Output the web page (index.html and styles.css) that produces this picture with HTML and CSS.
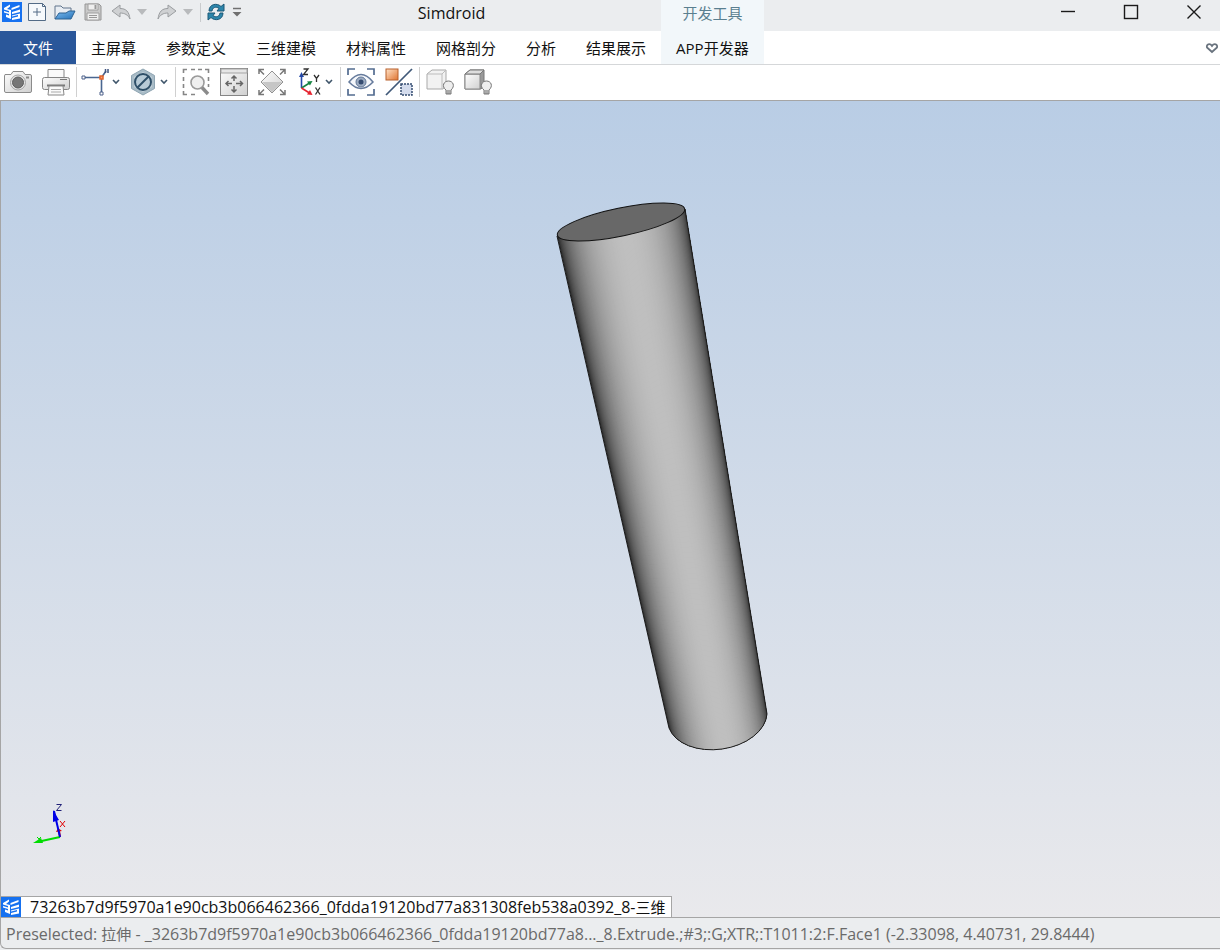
FILE: index.html
```html
<!DOCTYPE html>
<html lang="zh-CN">
<head>
<meta charset="utf-8">
<title>Simdroid</title>
<link rel="stylesheet" href="styles.css">
</head>
<body>
<svg class="defs" aria-hidden="true">
  <defs>
    <linearGradient id="silver" x1="0" y1="0" x2="1" y2="1"><stop offset="0" stop-color="#fdfdfd"/><stop offset="1" stop-color="#d0d0d0"/></linearGradient>
    <linearGradient id="orange" x1="0" y1="0" x2="1" y2="1"><stop offset="0" stop-color="#ffe3c8"/><stop offset="1" stop-color="#e07430"/></linearGradient>
    <linearGradient id="folder" x1="0" y1="0" x2="1" y2="1"><stop offset="0" stop-color="#7ebdf0"/><stop offset="1" stop-color="#2672b8"/></linearGradient>
    <symbol id="logo" viewBox="0 0 20 20">
      <rect width="20" height="20" fill="#1671f0"/>
      <path d="M2 6l6-3.500v2L5 7l4 1v9l-5-2v-2.500l3 1v-1.500l-5-1.500V9l5 1.500V9L2 7.500z" fill="#fff"/>
      <path d="M9.500 6l8-3v2l-8 3zM10 10l8-2.500v2.500l-8 2zM10 13.500l8-2v5l-8 1.500v-2l6-1.500v-1.500l-6 1.500z" fill="#fff"/>
    </symbol>
    <symbol id="chevron" viewBox="0 0 8 6"><path d="M1 1l3 3 3-3" fill="none" stroke="#40566b" stroke-width="1.600"/></symbol>
  </defs>
</svg>
<div class="window">
  <header class="ribbon">
    <div class="titlebar">
      <div class="quick">
        <svg class="logo" viewBox="0 0 20 20"><use href="#logo"/></svg>
        <button class="q q-new" aria-label="新建"><svg viewBox="0 0 18 18"><path d="M.5.500h14l3 3v14H.5z" fill="#f6f9fc" stroke="#536b86"/><path d="M14.500.500v3h3M9 5v8M5 9h8" fill="none" stroke="#536b86"/></svg></button>
        <button class="q q-open" aria-label="打开"><svg viewBox="0 0 22 18"><path d="M1 16V3h6l2 2h8v4" fill="#e8edf3" stroke="#60758c"/><path d="M1 16l4-6h7l3-2h6l-4 8z" fill="url(#folder)" stroke="#2e6292"/></svg></button>
        <button class="q q-save" aria-label="保存"><svg viewBox="0 0 18 18"><path d="M1 1h14l2 2v14H1z" fill="#c9c9c9" stroke="#969696"/><path d="M4 1h10v6H4zM3 10h12v7H3z" fill="#efefef" stroke="#a0a0a0"/><path d="M10.500 2h2v4h-2z" fill="#999"/><path d="M5 12.500h8M5 14.500h8" stroke="#999"/></svg></button>
        <button class="q q-undo" aria-label="撤销"><svg viewBox="0 0 20 16"><path d="M1 7l8-6v3.500c6 0 9 3 10 10.500-2-4-5-6-10-6V13z" fill="#cfd1d3" stroke="#9a9da0"/></svg></button>
        <button class="q q-drop" aria-label="撤销列表"><svg viewBox="0 0 10 6"><path d="M0 0h10L5 6z" fill="#b8babc"/></svg></button>
        <button class="q q-redo" aria-label="重做"><svg viewBox="0 0 20 16"><path d="M19 7l-8-6v3.500C5 4.500 2 7.500 1 15c2-4 5-6 10-6V13z" fill="#cfd1d3" stroke="#9a9da0"/></svg></button>
        <button class="q q-drop" aria-label="重做列表"><svg viewBox="0 0 10 6"><path d="M0 0h10L5 6z" fill="#b8babc"/></svg></button>
        <span class="q-sep"></span>
        <button class="q q-refresh" aria-label="刷新"><svg viewBox="0 0 18 18"><path d="M2 8C2 1 10-.5 14 3.500L17 1v7h-7l2-2.500C9 3 5.500 4.500 5 8z" fill="#2d86ab" stroke="#1c5877"/><path d="M16 10c0 7-8 8.500-12 4.500L1 17v-7h7l-2 2.500c3 2.500 6.500 1 7-2.500z" fill="#2d86ab" stroke="#1c5877"/></svg></button>
        <button class="q q-more" aria-label="自定义快速访问"><svg viewBox="0 0 10 10"><path d="M1 1.500h8" stroke="#707070" stroke-width="1.500"/><path d="M.5 5h9L5 9.500z" fill="#707070"/></svg></button>
      </div>
      <h1 class="title">Simdroid</h1>
    </div>
    <div class="context">开发工具</div>
    <div class="controls">
      <button aria-label="最小化"><svg viewBox="0 0 16 16"><path d="M1 7.500h14" stroke="#1a1a1a" stroke-width="1.400"/></svg></button>
      <button aria-label="最大化"><svg viewBox="0 0 16 16"><rect x="1.500" y="1.500" width="13" height="13" fill="none" stroke="#1a1a1a" stroke-width="1.400"/></svg></button>
      <button aria-label="关闭"><svg viewBox="0 0 16 16"><path d="M1.500 1.500l13 13M14.500 1.500l-13 13" stroke="#1a1a1a" stroke-width="1.400"/></svg></button>
    </div>
    <nav class="tabs">
      <button class="tab file">文件</button>
      <button class="tab">主屏幕</button>
      <button class="tab">参数定义</button>
      <button class="tab">三维建模</button>
      <button class="tab">材料属性</button>
      <button class="tab">网格剖分</button>
      <button class="tab">分析</button>
      <button class="tab">结果展示</button>
    </nav>
    <button class="tab app">APP开发器</button>
    <div class="tabs-end">
      <button class="heart" aria-label="收藏"><svg viewBox="0 0 14 12"><path d="M7 10L2 5.500C1 2 5 1 7 4c2-3 6-2 5 1.500z" fill="none" stroke="#69737e" stroke-width="1.800"/></svg></button>
    </div>
  </header>

  <div class="toolbar">
    <button class="tool" aria-label="截图"><svg viewBox="0 0 28 28"><path d="M1 6.500h6l2-3h10l2 3h5q1.500 0 1.500 1.500v15q0 1.500-1.500 1.500H2q-1.500 0-1.500-1.500V8z" fill="url(#silver)" stroke="#8b8b8b"/><circle cx="14" cy="14.500" r="7.500" fill="#e6e6e6" stroke="#a5a5a5"/><circle cx="14" cy="14.500" r="5.500" fill="#777" stroke="#606060"/><path d="M22 9.500h3" stroke="#888" stroke-width="2"/></svg></button>
    <button class="tool" aria-label="打印"><svg viewBox="0 0 28 28"><path d="M6 10V1.500h16V10" fill="#fafafa" stroke="#888"/><rect x=".5" y="9.500" width="27" height="12" rx="2" fill="url(#silver)" stroke="#858585"/><path d="M18 11.500h7" stroke="#777"/><path d="M5 17.500h18" stroke="#777" stroke-width="2"/><path d="M7 18h14l1 9H6z" fill="#fafafa" stroke="#888"/><path d="M9 21.500h10M9 24h10" stroke="#aaa"/></svg></button>
    <span class="sep"></span>
    <button class="tool drop" aria-label="选择点线"><svg viewBox="0 0 28 28"><path d="M3 9.500h17.500V25M20.500 9.500L25 3" fill="none" stroke="#4a6690" stroke-width="1.600"/><path d="M1 8h3v3H1zM19 24h3v3h-3z" fill="#fff" stroke="#4d618a"/><rect x="19" y="8" width="3" height="3" fill="#f4a072" stroke="#e2632b" stroke-width="1.500"/><path d="M24.500 5V1M27 5V1" stroke="#3e537e" stroke-width="1.500"/></svg><svg class="chev" viewBox="0 0 8 6"><use href="#chevron"/></svg></button>
    <button class="tool drop" aria-label="禁用选择"><svg viewBox="0 0 28 28"><path d="M14 1l11.500 6.500v13L14 27 2.500 20.500v-13z" fill="#a9bcc7" stroke="#8fa5b2"/><path d="M14 4l9 5v10l-9 5-9-5V9z" fill="#c3d1da"/><circle cx="14" cy="14" r="8" fill="#b8cbd7" stroke="#2e4f68" stroke-width="2"/><path d="M8.500 19.500l11-11" stroke="#2e4f68" stroke-width="2"/></svg><svg class="chev" viewBox="0 0 8 6"><use href="#chevron"/></svg></button>
    <span class="sep"></span>
    <button class="tool" aria-label="框选放大"><svg viewBox="0 0 28 28"><path d="M1.500 5V1.500H5M9 1.500h4M16 1.500h4M23 1.500h3.500V5M1.500 9v4M1.500 16v4M1.500 23v3.500H5M9 26.500h4M26.500 9v4M26.500 16v3" fill="none" stroke="#868686" stroke-width="1.600"/><circle cx="15.500" cy="14.500" r="6.500" fill="#efefef" stroke="#9a9a9a" stroke-width="1.600"/><path d="M20 19.500l6 6.500" stroke="#8b8b8b" stroke-width="3.400"/></svg></button>
    <button class="tool" aria-label="适合窗口"><svg viewBox="0 0 28 28"><rect x=".5" y=".5" width="27" height="27" fill="url(#silver)" stroke="#858585"/><path d="M1 1h26v4H1z" fill="#e6e6e6" stroke="#a5a5a5"/><path d="M14 8v5M14 18v6M6 15.500h6M16 15.500h7M11.500 10.500L14 8l2.500 2.500M11.500 21.500L14 24l2.500-2.500M8.500 13L6 15.500 8.500 18M20 13l2.500 2.500L20 18" fill="none" stroke="#666" stroke-width="1.500"/></svg></button>
    <button class="tool" aria-label="全部显示"><svg viewBox="0 0 28 28"><path d="M14 3l11 11-11 11L3 14z" fill="url(#silver)" stroke="#929292"/><path d="M4 14h20L14 24z" fill="#c6c6c6"/><path d="M1 6V1.500h5M1 1.500l5 5M22 1.500h5V6M27 1.500l-5 5M1 22v4.500h5M1 26.500l5-5M22 26.500h5V22M27 26.500l-5-5" fill="none" stroke="#777" stroke-width="1.500"/></svg></button>
    <button class="tool drop" aria-label="视图方向"><svg viewBox="0 0 28 28"><path d="M7.500 20V7" stroke="#2448a8" stroke-width="1.600"/><path d="M7.500 4l-2.500 5h5z" fill="#2448a8"/><path d="M7.500 20l8-5" stroke="#168442" stroke-width="1.600"/><path d="M18.500 13l-5.500.500 3 4z" fill="#168442"/><path d="M7.500 20l8 5" stroke="#e62430" stroke-width="1.600"/><path d="M18.500 27l-5.500-.500 3-4.500z" fill="#e62430"/><path d="M9.500 1h4.500l-4.500 5.500H14M20 7l2.500 3.500L25 7M22.500 10.500V14M21.500 19.500l4.500 7M26 19.500l-4.500 7" fill="none" stroke="#303030" stroke-width="1.300"/></svg><svg class="chev" viewBox="0 0 8 6"><use href="#chevron"/></svg></button>
    <span class="sep"></span>
    <button class="tool" aria-label="显示"><svg viewBox="0 0 28 28"><path d="M1 7V1h7M20 1h7v6M1 21v6h7M20 27h7v-6" fill="none" stroke="#536c90" stroke-width="1.700"/><path d="M2 14q12-15 24 0-12 13-24 0z" fill="#f5f7fb" stroke="#667b9c" stroke-width="1.500"/><circle cx="14" cy="14" r="5" fill="#9cabc1" stroke="#637897"/><circle cx="14" cy="14" r="2.500" fill="#354b70"/></svg></button>
    <button class="tool" aria-label="反转显示"><svg viewBox="0 0 28 28"><rect x="1" y="1" width="12" height="11" fill="url(#orange)" stroke="#b8612c"/><path d="M1 27L27 1" stroke="#405978" stroke-width="1.700"/><rect x="16" y="16" width="11" height="11" fill="#d4dced" stroke="#344c70" stroke-width="1.500" stroke-dasharray="2 1"/></svg></button>
    <span class="sep"></span>
    <button class="tool" aria-label="显示实体"><svg viewBox="0 0 28 28"><path d="M1 6l5-4h14v15l-3 4H1z" fill="#f2f2f2" stroke="#a9a9a9"/><path d="M1 6h15v15M16 6l4-4" fill="none" stroke="#bcbcbc"/><path d="M20 22c-5-4-2-9 2.500-9s7 5 2.500 9v4h-5z" fill="#eee" stroke="#777"/><path d="M20.500 23h4M20.500 25h4" stroke="#666"/></svg></button>
    <button class="tool" aria-label="隐藏实体"><svg viewBox="0 0 28 28"><path d="M1 6l5-4h14v15l-3 4H1z" fill="#999" stroke="#777"/><path d="M1 6h15v15H1z" fill="url(#silver)" stroke="#888"/><path d="M1 6l5-4h14l-4 4z" fill="#ddd" stroke="#777"/><path d="M20 22c-5-4-2-9 2.500-9s7 5 2.500 9v4h-5z" fill="#eee" stroke="#777"/><path d="M20.500 23h4M20.500 25h4" stroke="#666"/></svg></button>
  </div>

  <main class="view">
    <svg class="scene" viewBox="1 101 1219 795" role="img" aria-label="拉伸圆柱体">
      <defs><clipPath id="body"><path d="M557 236L669 728A50 33 -8 0 0 767 714L685 209z"/></clipPath></defs>
      <g id="strips" clip-path="url(#body)"></g>
      <path d="M557 236L669 728A50 33 -8 0 0 767 714L685 209" fill="none" stroke="#1a1a1a"/>
      <ellipse cx="621" cy="222" rx="65" ry="14" transform="rotate(-11.700 621 222)" fill="#686868" stroke="#111"/>
    </svg>
    <svg class="triad" viewBox="0 0 40 46" aria-hidden="true">
      <path d="M31 36l-1-6" stroke="#e00000" stroke-width="2"/><path d="M27 31l2-4 4 3z" fill="#e00000"/>
      <path d="M31 36L8 41" stroke="#00dc00" stroke-width="2"/><path d="M4 42l8-5 2 5z" fill="#00dc00"/><path d="M8 36l2 2 2-2M10 38v3" fill="none" stroke="#00dc00"/>
      <path d="M31 36L25 10" stroke="#0000e6" stroke-width="2"/><path d="M24 9l6 10-6 2z" fill="#0000e6"/>
      <path d="M27.500 3.500h5l-5 6h5" fill="none" stroke="#202078"/>
      <path d="M31 20l5 6M36 20l-5 6" stroke="#e00000"/>
    </svg>
    <div class="docs">
      <button class="doc"><svg class="logo" viewBox="0 0 20 20"><use href="#logo"/></svg><span>73263b7d9f5970a1e90cb3b066462366_0fdda19120bd77a831308feb538a0392_8-<span class="han">三维</span></span></button>
    </div>
  </main>

  <footer class="status">Preselected: <span class="han">拉伸</span> - _3263b7d9f5970a1e90cb3b066462366_0fdda19120bd77a8..._8.Extrude.;#3;:G;XTR;:T1011:2:F.Face1 (-2.33098, 4.40731, 29.8444)</footer>
</div>
<script src="scene.js"></script>
</body>
</html>
```
FILE: styles.css
```css
* { box-sizing: border-box; }
body {
  margin: 0;
  font: 15px/20px "Open Sans", "Noto Sans CJK SC", sans-serif;
  color: #111;
  background: #ebedef;
}
button { border: 0; padding: 0; margin: 0; background: none; font: inherit; color: inherit; }
svg { display: block; }
.defs { position: absolute; width: 0; height: 0; }
.window { display: flex; flex-direction: column; height: 100vh; padding-bottom: 1px; background: #ebedef; }

.ribbon {
  display: grid;
  grid-template-columns: auto auto 1fr;
  grid-template-rows: 31px 33px;
  background: #fff;
  border-bottom: 1px solid #d5d7d9;
}
.titlebar { display: flex; background: #ebedef; }
.quick { display: flex; align-items: center; height: 24px; padding-left: 2px; }
.logo { width: 20px; height: 20px; flex: none; }
.q svg { width: 100%; }
.q-new { width: 18px; margin-left: 6px; }
.q-open { width: 22px; margin-left: 8px; }
.q-save { width: 18px; margin-left: 8px; }
.q-undo { width: 20px; margin-left: 9px; }
.q-drop { width: 10px; margin-left: 6px; }
.q-redo { width: 20px; margin-left: 10px; }
.q-redo + .q-drop { margin-left: 6px; }
.q-sep { width: 1px; height: 19px; margin-left: 7px; background: #c9cbcd; }
.q-refresh { width: 18px; margin-left: 6px; }
.q-more { width: 10px; margin-left: 7px; }
.title { flex: 1; margin: 0; padding-top: 3px; text-align: center; font-size: 16px; font-weight: 400; }
.context { padding-top: 3px; text-align: center; color: #5a7f90; background: #f2f7fa; }
.controls { display: flex; justify-content: flex-end; gap: 11px; background: #ebedef; }
.controls button { display: flex; justify-content: center; width: 52px; height: 31px; padding-top: 4px; }
.controls svg { width: 16px; height: 16px; }
.tabs { display: flex; }
.tab { padding: 0 15px; white-space: nowrap; }
.file { width: 76px; color: #fff; background: #2a579a; }
.app { background: #f2f7fa; }
.tabs-end { display: flex; justify-content: flex-end; align-items: center; padding-right: 1px; }
.heart { width: 14px; }

.toolbar { display: flex; align-items: center; gap: 2px; height: 35px; padding-bottom: 1px; background: #fff; }
.tool { display: flex; align-items: center; justify-content: center; width: 36px; height: 34px; }
.tool svg { width: 28px; height: 28px; flex: none; }
.drop { justify-content: flex-start; gap: 3px; width: 46px; padding-left: 2px; }
.drop .chev { width: 8px; height: 6px; }
.sep { width: 1px; height: 30px; background: #d0d0d0; }

.view {
  position: relative;
  display: flex;
  flex-direction: column;
  flex: 1;
  min-height: 0;
  border-top: 1px solid #a5a5a5;
  border-left: 1px solid #a5a5a5;
  background: linear-gradient(#b9cde5, #e9e9ec);
}
.scene { flex: 1; width: 100%; min-height: 0; }
.triad { position: absolute; left: 28px; bottom: 70px; width: 40px; height: 46px; }
.docs { display: flex; }
.doc {
  display: flex;
  align-items: center;
  height: 21px;
  padding-right: 6px;
  gap: 9px;
  font-size: 16px;
  white-space: nowrap;
  background: #fff;
  border: 1px solid #a5a5a5;
  border-width: 1px 1px 0 0;
}
.han { font-size: 15px; }
.status {
  height: 32px;
  padding: 6px 5px;
  font-size: 16px;
  line-height: 20px;
  white-space: nowrap;
  overflow: hidden;
  color: #6a6a6a;
  background: #ebedef;
  border: 1px solid #a5a5a5;
  border-right: 0;
  border-bottom-left-radius: 6px;
}
```
FILE: scene.js
```js
// Shades the cylinder wall with narrow strips that converge along its length.
const group = document.getElementById("strips");
const count = 110;
const light = 0.05;
for (let i = 0; i < count; i++) {
  const t = i / count;
  const angle = Math.asin(2 * t - 1 + 1 / count);
  const level = Math.round(28 + 163 * Math.max(0, Math.cos(angle - light)));
  const strip = document.createElementNS("http://www.w3.org/2000/svg", "polygon");
  const topX = 557 + 128 * t;
  const topY = 236 - 27 * t;
  const endX = 676 + 96 * t;
  const endY = 760 - 15 * t;
  strip.setAttribute("points", `${topX},${topY} 686,209 772,745 772,762 ${endX},${endY}`);
  strip.setAttribute("fill", `rgb(${level},${level},${level})`);
  group.appendChild(strip);
}
```
